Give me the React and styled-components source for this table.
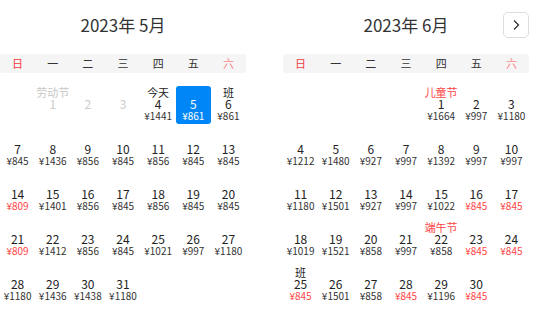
import React from "react";
import styled, { createGlobalStyle } from "styled-components";

const GlobalStyle = createGlobalStyle`
    body, html {
        margin: 0;
        padding: 0;
        background: #fff;
    }
    body {
        font-family: "Noto Sans CJK SC", "Noto Sans", sans-serif;
        color: #333;
    }
`;

const Wrapper = styled.div`
    display: flex;
    gap: 37px;
    width: 553px;
    height: 314px;
    overflow: hidden;
`;

const Month = styled.div`
    width: 246px;
    display: flex;
    flex-direction: column;
`;

const MonthHeader = styled.div`
    display: grid;
    grid-template-columns: 26px 1fr 26px;
    align-items: center;
    height: 26px;
    padding-top: 12px;
    margin-bottom: 16px;
`;

const Title = styled.div`
    grid-column: 2;
    text-align: center;
    font-size: 17px;
    line-height: 26px;
    color: #333;
`;

const NextButton = styled.button`
    grid-column: 3;
    width: 26px;
    height: 26px;
    padding: 0;
    display: flex;
    align-items: center;
    justify-content: center;
    border: 1px solid #ddd;
    border-radius: 5px;
    background: #fff;
    box-sizing: border-box;
`;

const WeekBar = styled.div`
    display: grid;
    grid-template-columns: repeat(7, 1fr);
    height: 19px;
    background: #f5f5f5;
    border-radius: 3px;
    margin-bottom: 13px;
`;

const WeekDay = styled.div`
    text-align: center;
    font-size: 11px;
    line-height: 19px;
    color: ${(p) => p.$color || "#333"};
`;

const Days = styled.div`
    display: grid;
    grid-template-columns: repeat(7, 1fr);
    row-gap: 7px;
`;

const Cell = styled.div`
    height: 38px;
    box-sizing: border-box;
    padding-bottom: 3px;
    display: flex;
    flex-direction: column;
    align-items: center;
    border-radius: 3px;
    background: ${(p) => (p.$selected ? "#0086f6" : "transparent")};
    color: ${(p) => (p.$selected ? "#fff" : p.$disabled ? "#ccc" : "#222")};
`;

const Label = styled.div`
    font-size: 11px;
    line-height: 12px;
    height: 12px;
    white-space: nowrap;
    color: ${(p) => p.$color};
`;

const DayNum = styled.div`
    font-size: 12px;
    line-height: 12px;
    height: 12px;
`;

const Price = styled.div`
    font-size: 10px;
    line-height: 11px;
    height: 11px;
    white-space: nowrap;
    color: ${(p) => (p.$selected ? "#fff" : p.$low ? "#ff4444" : "#333")};
`;

const weekdays = [
    { t: "日", c: "#f23c3c" },
    { t: "一" },
    { t: "二" },
    { t: "三" },
    { t: "四" },
    { t: "五" },
    { t: "六", c: "#f78a8a" },
];

// [day, price, lowPrice, label, labelColor, disabled, selected]
const may = {
    offset: 1,
    days: [
        [1, null, false, "劳动节", "#c8c8c8", true],
        [2, null, false, null, null, true],
        [3, null, false, null, null, true],
        [4, 1441, false, "今天", "#222"],
        [5, 861, false, null, null, false, true],
        [6, 861, false, "班", "#222"],
        [7, 845], [8, 1436], [9, 856], [10, 845], [11, 856], [12, 845], [13, 845],
        [14, 809, true], [15, 1401], [16, 856], [17, 845], [18, 856], [19, 845], [20, 845],
        [21, 809, true], [22, 1412], [23, 856], [24, 845], [25, 1021], [26, 997], [27, 1180],
        [28, 1180], [29, 1436], [30, 1438], [31, 1180],
    ],
};

const june = {
    offset: 4,
    days: [
        [1, 1664, false, "儿童节", "#ff4444"], [2, 997], [3, 1180],
        [4, 1212], [5, 1480], [6, 927], [7, 997], [8, 1392], [9, 997], [10, 997],
        [11, 1180], [12, 1501], [13, 927], [14, 997], [15, 1022], [16, 845, true], [17, 845, true],
        [18, 1019], [19, 1521], [20, 858], [21, 997], [22, 858, false, "端午节", "#ff4444"], [23, 845, true], [24, 845, true],
        [25, 845, true, "班", "#222"], [26, 1501], [27, 858], [28, 845, true], [29, 1196], [30, 845, true],
    ],
};

const ChevronRight = () => (
    <svg width="10" height="12" viewBox="0 0 10 12">
        <polyline points="3,1.5 7.5,6 3,10.5" fill="none" stroke="#333" strokeWidth="1.3" />
    </svg>
);

const MonthView = ({ title, data, showNext }) => (
    <Month>
        <MonthHeader>
            <Title>{title}</Title>
            {showNext && (
                <NextButton>
                    <ChevronRight />
                </NextButton>
            )}
        </MonthHeader>
        <WeekBar>
            {weekdays.map((w) => (
                <WeekDay key={w.t} $color={w.c}>{w.t}</WeekDay>
            ))}
        </WeekBar>
        <Days>
            {Array.from({ length: data.offset }).map((_, i) => (
                <div key={"e" + i} />
            ))}
            {data.days.map(([d, price, low, label, labelColor, disabled, selected]) => (
                <Cell key={d} $selected={selected} $disabled={disabled}>
                    <Label $color={labelColor}>{label}</Label>
                    <DayNum>{d}</DayNum>
                    <Price $low={low} $selected={selected}>{price ? `¥${price}` : ""}</Price>
                </Cell>
            ))}
        </Days>
    </Month>
);

const App = () => (
    <>
        <GlobalStyle />
        <Wrapper>
            <MonthView title="2023年 5月" data={may} />
            <MonthView title="2023年 6月" data={june} showNext />
        </Wrapper>
    </>
);

export default App;
